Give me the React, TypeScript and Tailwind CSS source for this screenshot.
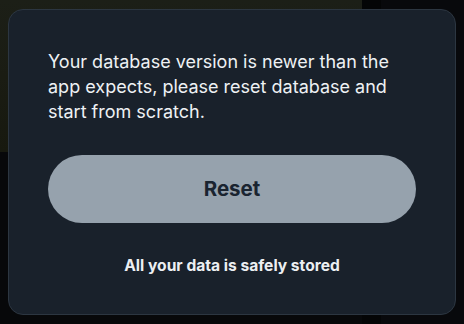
import React from "react";

export default function App() {
  return (
    <div
      className="relative w-[464px] h-[324px] overflow-hidden bg-[#07080a]"
      style={{ fontFamily: "Inter, 'Noto Sans', sans-serif" }}
    >
      {/* dimmed page behind the dialog */}
      <div className="flex h-full">
        <div className="flex flex-col w-[362px]">
          <div className="h-[152px] bg-gradient-to-b from-[#1c1f17] via-[#1a1c13] to-[#17190f]" />
          <div className="flex-1 bg-[#07080a]" />
        </div>
        <div className="w-[19px] bg-[#040506]" />
        <div className="flex-1 bg-[#08090c]" />
      </div>

      {/* dialog */}
      <div className="absolute left-[8px] top-[9px] w-[448px] h-[306px] rounded-[15px] border border-[#2c3641] bg-[#19212b] px-[39px] pt-[39px] flex flex-col">
        <p className="text-[18px] leading-[25px] text-[#eef1f4]">
          Your database version is newer than the app expects, please reset database and start from scratch.
        </p>
        <button className="mt-[31px] h-[68px] w-full rounded-full bg-[#96a2ad] text-[20.5px] font-bold text-[#1a2430]">
          Reset
        </button>
        <p className="mt-[31px] text-center text-[15.6px] font-bold text-[#eceff2]">
          All your data is safely stored
        </p>
      </div>
    </div>
  );
}
